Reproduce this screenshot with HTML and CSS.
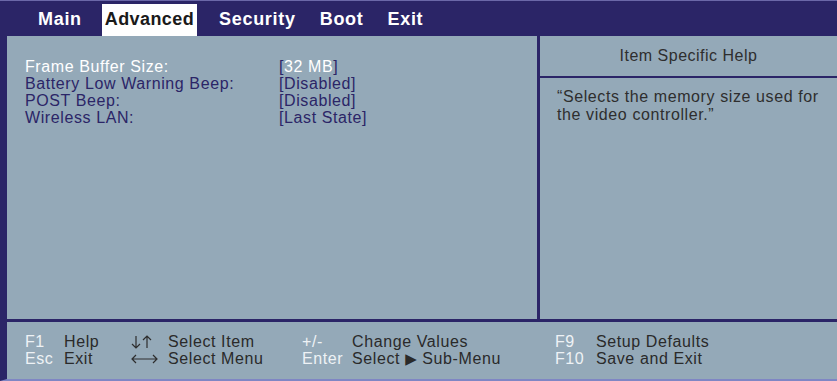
FILE: index.html
```html
<!DOCTYPE html>
<html lang="en">
<head>
    <meta charset="UTF-8">
    <title>BIOS Setup - Advanced</title>
    <link rel="stylesheet" href="styles.css">
</head>
<body>
<div class="screen">
    <div class="menu-bar">
        <span class="tab">Main</span>
        <span class="tab active">Advanced</span>
        <span class="tab">Security</span>
        <span class="tab">Boot</span>
        <span class="tab">Exit</span>
    </div>

    <div class="main">
        <div class="settings">
            <div class="row selected">
                <span class="label">Frame Buffer Size:</span>
                <span class="value">[<span class="val-text">32 MB</span>]</span>
            </div>
            <div class="row">
                <span class="label">Battery Low Warning Beep:</span>
                <span class="value">[Disabled]</span>
            </div>
            <div class="row">
                <span class="label">POST Beep:</span>
                <span class="value">[Disabled]</span>
            </div>
            <div class="row">
                <span class="label">Wireless LAN:</span>
                <span class="value">[Last State]</span>
            </div>
        </div>
        <div class="help">
            <div class="help-title">Item Specific Help</div>
            <div class="help-text">“Selects the memory size used for the video controller.”</div>
        </div>
    </div>

    <div class="footer">
        <div class="keys">
            <span class="key">F1</span><span class="desc">Help</span>
            <span class="key">Esc</span><span class="desc">Exit</span>
        </div>
        <div class="keys arrows">
            <span class="arrow">
                <svg width="22" height="14" viewBox="0 0 22 14" fill="none" stroke="#2e2e2e" stroke-width="1.2">
                    <path d="M5 1 V13 M1 9 L5 13 L9 9"/>
                    <path d="M16 13 V1 M12 5 L16 1 L20 5"/>
                </svg>
            </span><span class="desc">Select Item</span>
            <span class="arrow">
                <svg width="27" height="10" viewBox="0 0 27 10" fill="none" stroke="#2e2e2e" stroke-width="1.2">
                    <path d="M1 5 H26 M5 1 L1 5 L5 9 M22 1 L26 5 L22 9"/>
                </svg>
            </span><span class="desc">Select Menu</span>
        </div>
        <div class="keys wide">
            <span class="key">+/-</span><span class="desc">Change Values</span>
            <span class="key">Enter</span><span class="desc">Select <span class="tri">▶</span> Sub-Menu</span>
        </div>
        <div class="keys last">
            <span class="key">F9</span><span class="desc">Setup Defaults</span>
            <span class="key">F10</span><span class="desc">Save and Exit</span>
        </div>
    </div>
</div>
</body>
</html>
```

FILE: styles.css
```css
/* Page */
body {
    margin: 0;
    background-color: #94a9b8;
    font-family: "Liberation Sans", Arial, sans-serif;
}

.screen {
    width: 837px;
    height: 381px;
    box-sizing: border-box;
    border-left: 7px solid #2b2567;
    border-bottom: 2px solid #7f86c4;
    display: flex;
    flex-direction: column;
}

/* Top menu bar */
.menu-bar {
    flex-shrink: 0;
    height: 36px;
    box-sizing: border-box;
    margin-left: -7px;
    padding: 3px 0 0 35px;
    background-color: #2b2567;
    border-top: 1px solid #6b68a8;
    display: flex;
    gap: 18px;
}

.tab {
    padding: 0 3px;
    color: #ffffff;
    font-size: 18px;
    font-weight: bold;
    letter-spacing: 0.7px;
    line-height: 31px;
}

.tab.active {
    margin: 0 1px 0 -1px;
    background-color: #ffffff;
    color: #1a1a1a;
    letter-spacing: 0.4px;
}

/* Middle area */
.main {
    flex-shrink: 0;
    height: 286px;
    box-sizing: border-box;
    display: flex;
    border-bottom: 3px solid #2b2567;
}

.settings {
    width: 533px;
    padding: 22px 0 0 18px;
    box-sizing: border-box;
    border-right: 3px solid #2b2567;
}

.row {
    display: flex;
    font-size: 16px;
    line-height: 17px;
    letter-spacing: 0.6px;
    color: #2b2567;
}

.label {
    width: 254px;
}

.row.selected .label,
.val-text {
    color: #ffffff;
}

.help {
    flex: 1;
}

.help-title {
    height: 40px;
    line-height: 40px;
    text-align: center;
    font-size: 16px;
    letter-spacing: 0.5px;
    color: #2e2e2e;
    border-bottom: 2px solid #2b2567;
}

.help-text {
    padding: 10px 10px 0 17px;
    font-size: 16px;
    line-height: 18px;
    letter-spacing: 0.6px;
    color: #2e2e2e;
}

/* Footer legend */
.footer {
    flex: 1;
    display: flex;
    align-items: flex-start;
    padding: 11px 0 0 18px;
    font-size: 16px;
    line-height: 17px;
    letter-spacing: 0.6px;
}

.keys {
    display: grid;
    grid-template-columns: 39px auto;
    grid-auto-rows: 17px;
    width: 106px;
}

.keys.arrows {
    grid-template-columns: 37px auto;
    width: 171px;
}

.keys.wide {
    grid-template-columns: 50px auto;
    width: 253px;
}

.keys.last {
    grid-template-columns: 41px auto;
    width: auto;
}

.key {
    color: #eef2f5;
}

.arrow {
    display: flex;
    align-items: center;
}

.arrow svg {
    display: block;
}

.desc {
    color: #2a2a2a;
}

.tri {
    font-family: "DejaVu Sans", sans-serif;
    font-size: 15px;
    line-height: 1;
}
```
